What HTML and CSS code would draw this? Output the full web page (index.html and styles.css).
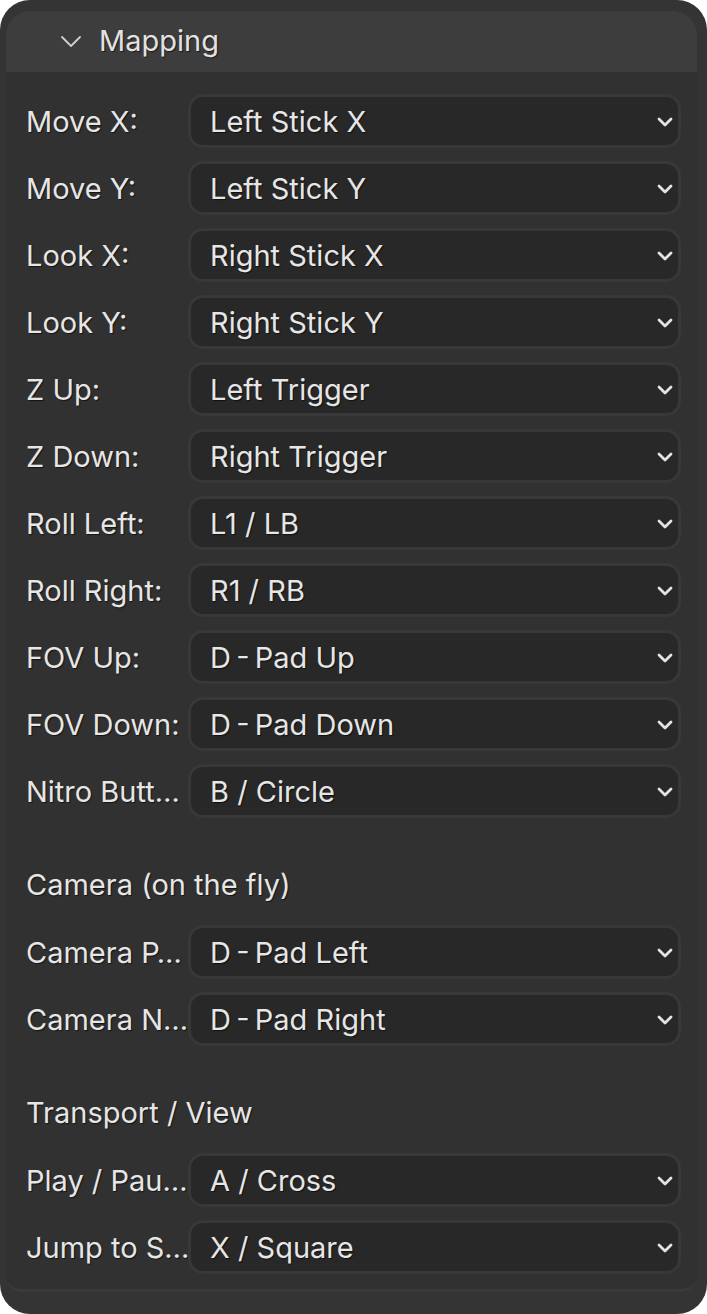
FILE: index.html
```html
<!DOCTYPE html>
<html lang="en">
<head>
    <meta charset="UTF-8">
    <title>Mapping</title>
    <link rel="stylesheet" href="styles.css">
</head>
<body>
    <div class="window">
        <div class="panel">
            <div class="panel-header">
                <svg class="header-chevron" width="22" height="14" viewBox="0 0 22 14">
                    <path d="M2 2 L11 11 L20 2" fill="none" stroke="#cfcfcf" stroke-width="1.8" stroke-linecap="round" stroke-linejoin="round"/>
                </svg>
                <span class="panel-title">Mapping</span>
            </div>
            <div class="panel-body">
                <div class="row"><span class="label">Move X:</span><div class="select"><span>Left Stick X</span><svg class="chev" width="18" height="12" viewBox="0 0 18 12"><path d="M3 3 L9 9 L15 3" fill="none" stroke="#e4e4e4" stroke-width="2.8" stroke-linecap="round" stroke-linejoin="round"/></svg></div></div>
                <div class="row"><span class="label">Move Y:</span><div class="select"><span>Left Stick Y</span><svg class="chev" width="18" height="12" viewBox="0 0 18 12"><path d="M3 3 L9 9 L15 3" fill="none" stroke="#e4e4e4" stroke-width="2.8" stroke-linecap="round" stroke-linejoin="round"/></svg></div></div>
                <div class="row"><span class="label">Look X:</span><div class="select"><span>Right Stick X</span><svg class="chev" width="18" height="12" viewBox="0 0 18 12"><path d="M3 3 L9 9 L15 3" fill="none" stroke="#e4e4e4" stroke-width="2.8" stroke-linecap="round" stroke-linejoin="round"/></svg></div></div>
                <div class="row"><span class="label">Look Y:</span><div class="select"><span>Right Stick Y</span><svg class="chev" width="18" height="12" viewBox="0 0 18 12"><path d="M3 3 L9 9 L15 3" fill="none" stroke="#e4e4e4" stroke-width="2.8" stroke-linecap="round" stroke-linejoin="round"/></svg></div></div>
                <div class="row"><span class="label">Z Up:</span><div class="select"><span>Left Trigger</span><svg class="chev" width="18" height="12" viewBox="0 0 18 12"><path d="M3 3 L9 9 L15 3" fill="none" stroke="#e4e4e4" stroke-width="2.8" stroke-linecap="round" stroke-linejoin="round"/></svg></div></div>
                <div class="row"><span class="label">Z Down:</span><div class="select"><span>Right Trigger</span><svg class="chev" width="18" height="12" viewBox="0 0 18 12"><path d="M3 3 L9 9 L15 3" fill="none" stroke="#e4e4e4" stroke-width="2.8" stroke-linecap="round" stroke-linejoin="round"/></svg></div></div>
                <div class="row"><span class="label">Roll Left:</span><div class="select"><span>L1 / LB</span><svg class="chev" width="18" height="12" viewBox="0 0 18 12"><path d="M3 3 L9 9 L15 3" fill="none" stroke="#e4e4e4" stroke-width="2.8" stroke-linecap="round" stroke-linejoin="round"/></svg></div></div>
                <div class="row"><span class="label">Roll Right:</span><div class="select"><span>R1 / RB</span><svg class="chev" width="18" height="12" viewBox="0 0 18 12"><path d="M3 3 L9 9 L15 3" fill="none" stroke="#e4e4e4" stroke-width="2.8" stroke-linecap="round" stroke-linejoin="round"/></svg></div></div>
                <div class="row"><span class="label">FOV Up:</span><div class="select"><span>D&thinsp;-&thinsp;Pad Up</span><svg class="chev" width="18" height="12" viewBox="0 0 18 12"><path d="M3 3 L9 9 L15 3" fill="none" stroke="#e4e4e4" stroke-width="2.8" stroke-linecap="round" stroke-linejoin="round"/></svg></div></div>
                <div class="row"><span class="label">FOV Down:</span><div class="select"><span>D&thinsp;-&thinsp;Pad Down</span><svg class="chev" width="18" height="12" viewBox="0 0 18 12"><path d="M3 3 L9 9 L15 3" fill="none" stroke="#e4e4e4" stroke-width="2.8" stroke-linecap="round" stroke-linejoin="round"/></svg></div></div>
                <div class="row"><span class="label">Nitro Butt…</span><div class="select"><span>B / Circle</span><svg class="chev" width="18" height="12" viewBox="0 0 18 12"><path d="M3 3 L9 9 L15 3" fill="none" stroke="#e4e4e4" stroke-width="2.8" stroke-linecap="round" stroke-linejoin="round"/></svg></div></div>

                <div class="section-title">Camera (on the fly)</div>
                <div class="row"><span class="label">Camera P…</span><div class="select"><span>D&thinsp;-&thinsp;Pad Left</span><svg class="chev" width="18" height="12" viewBox="0 0 18 12"><path d="M3 3 L9 9 L15 3" fill="none" stroke="#e4e4e4" stroke-width="2.8" stroke-linecap="round" stroke-linejoin="round"/></svg></div></div>
                <div class="row"><span class="label">Camera N…</span><div class="select"><span>D&thinsp;-&thinsp;Pad Right</span><svg class="chev" width="18" height="12" viewBox="0 0 18 12"><path d="M3 3 L9 9 L15 3" fill="none" stroke="#e4e4e4" stroke-width="2.8" stroke-linecap="round" stroke-linejoin="round"/></svg></div></div>

                <div class="section-title">Transport / View</div>
                <div class="row"><span class="label">Play / Pau…</span><div class="select"><span>A / Cross</span><svg class="chev" width="18" height="12" viewBox="0 0 18 12"><path d="M3 3 L9 9 L15 3" fill="none" stroke="#e4e4e4" stroke-width="2.8" stroke-linecap="round" stroke-linejoin="round"/></svg></div></div>
                <div class="row"><span class="label">Jump to S…</span><div class="select"><span>X / Square</span><svg class="chev" width="18" height="12" viewBox="0 0 18 12"><path d="M3 3 L9 9 L15 3" fill="none" stroke="#e4e4e4" stroke-width="2.8" stroke-linecap="round" stroke-linejoin="round"/></svg></div></div>
            </div>
        </div>
    </div>
</body>
</html>
```

FILE: styles.css
```css
/* Blender style panel */
html, body {
    margin: 0;
    padding: 0;
    background: #ffffff;
}
body {
    font-family: Inter, "Noto Sans", sans-serif;
    color: #e6e6e6;
}
.window {
    width: 707px;
    height: 1314px;
    box-sizing: border-box;
    background-color: #343434;
    border-radius: 30px;
    padding: 11px 10px 0 6px;
    overflow: hidden;
}
.panel {
    background-color: #313131;
    border-radius: 24px 24px 16px 16px;
    border-bottom: 3px solid #3a3a3a;
}
/* header with collapse arrow */
.panel-header {
    height: 61px;
    background-color: #3d3d3d;
    border-radius: 24px 24px 0 0;
    display: flex;
    align-items: center;
    padding-left: 54px;
}
.header-chevron {
    margin-right: 17px;
    margin-top: 0;
}
.panel-title {
    font-size: 29px;
    color: #e2e2e2;
    margin-top: -3px;
    text-shadow: 1px 1px 1px rgba(0, 0, 0, 0.6);
}
.panel-body {
    display: flex;
    flex-direction: column;
    gap: 13px;
    padding: 22px 16px 15px 14px;
}
.row {
    display: flex;
    align-items: center;
    height: 54px;
}
.label {
    width: 168px;
    flex-shrink: 0;
    padding-left: 6px;
    box-sizing: border-box;
    font-size: 29px;
    white-space: nowrap;
    text-shadow: 1px 1px 1px rgba(0, 0, 0, 0.6);
}
/* dropdown field */
.select {
    flex: 1;
    height: 54px;
    box-sizing: border-box;
    display: flex;
    align-items: center;
    justify-content: space-between;
    background-color: #282828;
    border: 3px solid #383838;
    border-radius: 15px;
    padding: 0 4px 0 19px;
    font-size: 29px;
    text-shadow: 1px 1px 1px rgba(0, 0, 0, 0.6);
}
.chev {
    margin-top: 2px;
}
.section-title {
    height: 40px;
    line-height: 40px;
    margin: 34px 0 7px 0;
    padding-left: 6px;
    font-size: 29px;
    text-shadow: 1px 1px 1px rgba(0, 0, 0, 0.6);
}
```
